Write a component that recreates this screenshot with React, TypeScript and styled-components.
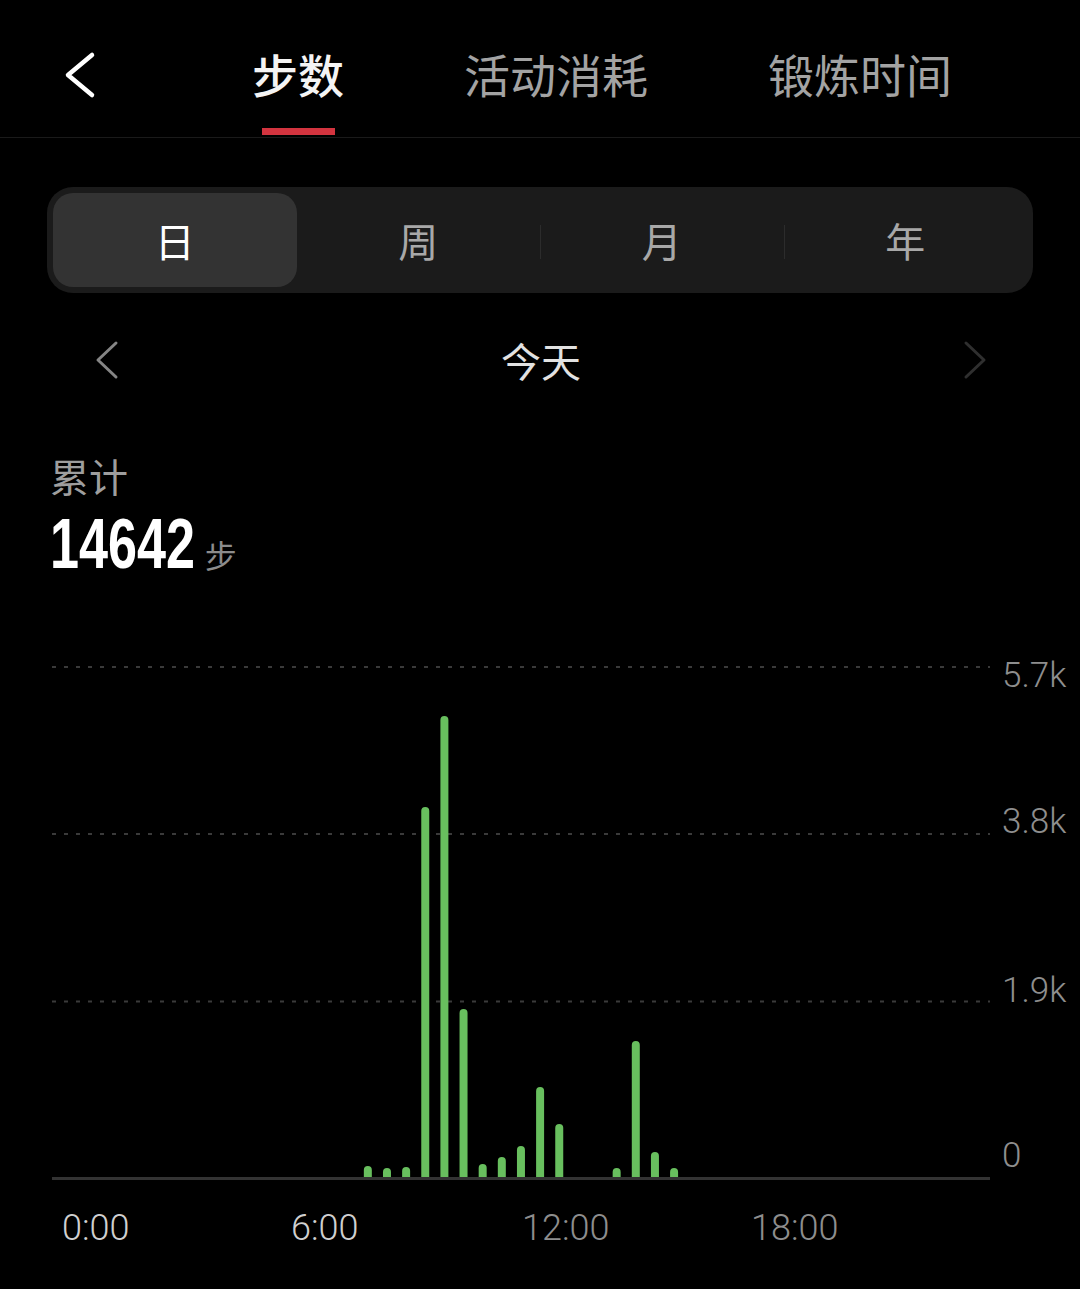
import React from "react";
import styled, { createGlobalStyle } from "styled-components";

const GlobalStyle = createGlobalStyle`
  html, body {
    margin: 0;
    padding: 0;
    background: #000;
  }
  body {
    font-family: "Noto Sans CJK SC", "Noto Sans", sans-serif;
    color: #fff;
    -webkit-font-smoothing: antialiased;
  }
  * { box-sizing: border-box; }
`;

const Page = styled.div`
  width: 1080px;
  height: 1289px;
  background: #000;
  overflow: hidden;
  display: flex;
  flex-direction: column;
`;

/* ---------- header ---------- */
const Header = styled.header`
  height: 138px;
  display: flex;
  align-items: flex-start;
  padding-left: 60px;
  border-bottom: 1px solid #1a1a1a;
`;

const BackButton = styled.button`
  margin-top: 50px;
  width: 40px;
  height: 50px;
  padding: 0;
  border: 0;
  background: transparent;
  margin-right: 152px;
  display: flex;
`;

const Tabs = styled.nav`
  display: flex;
  gap: 120px;
  height: 100%;
`;

const Tab = styled.div<{ $active?: boolean }>`
  display: flex;
  flex-direction: column;
  align-items: center;
  padding-top: 45px;
  font-size: 46px;
  line-height: 56px;
  font-weight: ${(p) => (p.$active ? 500 : 400)};
  color: ${(p) => (p.$active ? "#f4f4f4" : "#a3a3a3")};
`;

const TabUnderline = styled.span<{ $active?: boolean }>`
  margin-top: 27px;
  width: 73px;
  height: 7px;
  background: ${(p) => (p.$active ? "#d3343f" : "transparent")};
`;

/* ---------- segmented control ---------- */
const Segmented = styled.div`
  margin: 49px 47px 0;
  height: 106px;
  padding: 6px;
  border-radius: 26px;
  background: #1b1b1b;
  display: grid;
  grid-template-columns: repeat(4, 1fr);
`;

const Segment = styled.div<{ $active?: boolean; $divider?: boolean }>`
  position: relative;
  display: flex;
  align-items: center;
  justify-content: center;
  border-radius: 20px;
  background: ${(p) => (p.$active ? "#333333" : "transparent")};
  color: ${(p) => (p.$active ? "#ffffff" : "#a8a8a8")};
  font-size: 40px;
  line-height: 1;

  &::before {
    content: "";
    display: ${(p) => (p.$divider ? "block" : "none")};
    position: absolute;
    left: 0;
    top: 32px;
    width: 1px;
    height: 34px;
    background: #2c2c2c;
  }
`;

/* ---------- date row ---------- */
const DateRow = styled.div`
  margin-top: 17px;
  height: 100px;
  display: flex;
  align-items: center;
  justify-content: space-between;
  padding: 0 92px 0 94px;
`;

const DateTitle = styled.div`
  font-size: 40px;
  line-height: 1;
  color: #e2e2e2;
`;

const Chevron = styled.svg`
  display: block;
`;

/* ---------- summary ---------- */
const Summary = styled.section`
  margin-top: 42px;
  padding-left: 50px;
  display: flex;
  flex-direction: column;
`;

const SummaryLabel = styled.div`
  font-size: 39px;
  line-height: 46px;
  color: #9e9e9e;
`;

const TotalRow = styled.div`
  margin-top: 11px;
  height: 70px;
  display: flex;
  align-items: baseline;
`;

const TotalNumber = styled.span`
  display: inline-block;
  font-family: "Liberation Sans", Arial, sans-serif;
  font-weight: 700;
  font-size: 70px;
  line-height: 70px;
  color: #ffffff;
  transform: scaleX(0.745);
  transform-origin: left center;
  margin-right: -40px;
`;

const TotalUnit = styled.span`
  font-size: 32px;
  line-height: 1;
  color: #8c8c8c;
`;

/* ---------- chart ---------- */
const ChartSvg = styled.svg`
  display: block;
  margin-top: 61px;
  flex: none;
`;

const AxisText = styled.text<{ $tone?: "light" | "mid" }>`
  font-family: Roboto, "Liberation Sans", sans-serif;
  font-weight: 300;
  font-size: 36px;
  fill: ${(p) => (p.$tone === "light" ? "#d0d0d0" : "#8e8e8e")};
`;

const hourly: { slot: number; steps: number }[] = [
  { slot: 16, steps: 114 },
  { slot: 17, steps: 93 },
  { slot: 18, steps: 103 },
  { slot: 19, steps: 3829 },
  { slot: 20, steps: 4771 },
  { slot: 21, steps: 1738 },
  { slot: 22, steps: 135 },
  { slot: 23, steps: 207 },
  { slot: 24, steps: 321 },
  { slot: 25, steps: 931 },
  { slot: 26, steps: 548 },
  { slot: 29, steps: 93 },
  { slot: 30, steps: 1407 },
  { slot: 31, steps: 259 },
  { slot: 32, steps: 93 },
];

const total = hourly.reduce((s, d) => s + d.steps, 0);

const CHART_TOP = 640;
const BASE_Y = 1177;
const PX_PER_STEP = 0.09664;
const SLOT_X0 = 61.6;
const SLOT_W = 19.14;
const BAR_W = 8;

const gridLines = [
  { y: 667, label: "5.7k", labelY: 687 },
  { y: 834, label: "3.8k", labelY: 833 },
  { y: 1001.5, label: "1.9k", labelY: 1002 },
];

const xLabels = [
  { text: "0:00", x: 62, tone: "light" as const },
  { text: "6:00", x: 291, tone: "light" as const },
  { text: "12:00", x: 522, tone: "mid" as const },
  { text: "18:00", x: 751, tone: "mid" as const },
];

function barPath(cx: number, top: number) {
  const r = BAR_W / 2;
  const l = cx - r;
  const rr = cx + r;
  return `M${l},${BASE_Y} V${top + r} A${r},${r} 0 0 1 ${rr},${top + r} V${BASE_Y} Z`;
}

const StepsChart: React.FC = () => (
  <ChartSvg width={1080} height={649} viewBox="0 0 1080 649">
    <g transform={`translate(0,${-CHART_TOP})`}>
      {gridLines.map((g) => (
        <g key={g.label}>
          <line
            x1={52}
            x2={990}
            y1={g.y}
            y2={g.y}
            stroke="#3a3a3a"
            strokeWidth={2}
            strokeDasharray="4 8"
          />
          <AxisText x={1002} y={g.labelY} style={{ fontSize: 35 }}>
            {g.label}
          </AxisText>
        </g>
      ))}
      <AxisText x={1002} y={1167} style={{ fontSize: 35 }}>
        0
      </AxisText>

      {hourly.map((d) => {
        const cx = SLOT_X0 + SLOT_W * d.slot;
        const top = BASE_Y - d.steps * PX_PER_STEP;
        return <path key={d.slot} d={barPath(cx, top)} fill="#68bf5e" />;
      })}

      <line x1={52} x2={990} y1={1178.5} y2={1178.5} stroke="#333333" strokeWidth={3} />

      {xLabels.map((l) => (
        <AxisText key={l.text} x={l.x} y={1240} $tone={l.tone}>
          {l.text}
        </AxisText>
      ))}
    </g>
  </ChartSvg>
);

const tabs = ["步数", "活动消耗", "锻炼时间"];
const periods = ["日", "周", "月", "年"];

export default function App() {
  const activeTab = 0;
  const activePeriod = 0;
  return (
    <>
      <GlobalStyle />
      <Page>
        <Header>
          <BackButton aria-label="返回">
            <svg width="40" height="50" viewBox="0 0 40 50">
              <polyline
                points="32,5 8,25 32,45"
                fill="none"
                stroke="#ffffff"
                strokeWidth={4.5}
                strokeLinecap="round"
                strokeLinejoin="round"
              />
            </svg>
          </BackButton>
          <Tabs>
            {tabs.map((t, i) => (
              <Tab key={t} $active={i === activeTab}>
                {t}
                <TabUnderline $active={i === activeTab} />
              </Tab>
            ))}
          </Tabs>
        </Header>

        <Segmented>
          {periods.map((p, i) => (
            <Segment
              key={p}
              $active={i === activePeriod}
              $divider={i > 0 && i !== activePeriod && i - 1 !== activePeriod}
            >
              {p}
            </Segment>
          ))}
        </Segmented>

        <DateRow>
          <Chevron width="26" height="40" viewBox="0 0 26 40">
            <polyline
              points="22,3 4,20 22,37"
              fill="none"
              stroke="#858585"
              strokeWidth={3}
              strokeLinecap="round"
              strokeLinejoin="round"
            />
          </Chevron>
          <DateTitle>今天</DateTitle>
          <Chevron width="26" height="40" viewBox="0 0 26 40">
            <polyline
              points="4,3 22,20 4,37"
              fill="none"
              stroke="#2f2f2f"
              strokeWidth={3}
              strokeLinecap="round"
              strokeLinejoin="round"
            />
          </Chevron>
        </DateRow>

        <Summary>
          <SummaryLabel>累计</SummaryLabel>
          <TotalRow>
            <TotalNumber>{total}</TotalNumber>
            <TotalUnit>步</TotalUnit>
          </TotalRow>
        </Summary>

        <StepsChart />
      </Page>
    </>
  );
}
